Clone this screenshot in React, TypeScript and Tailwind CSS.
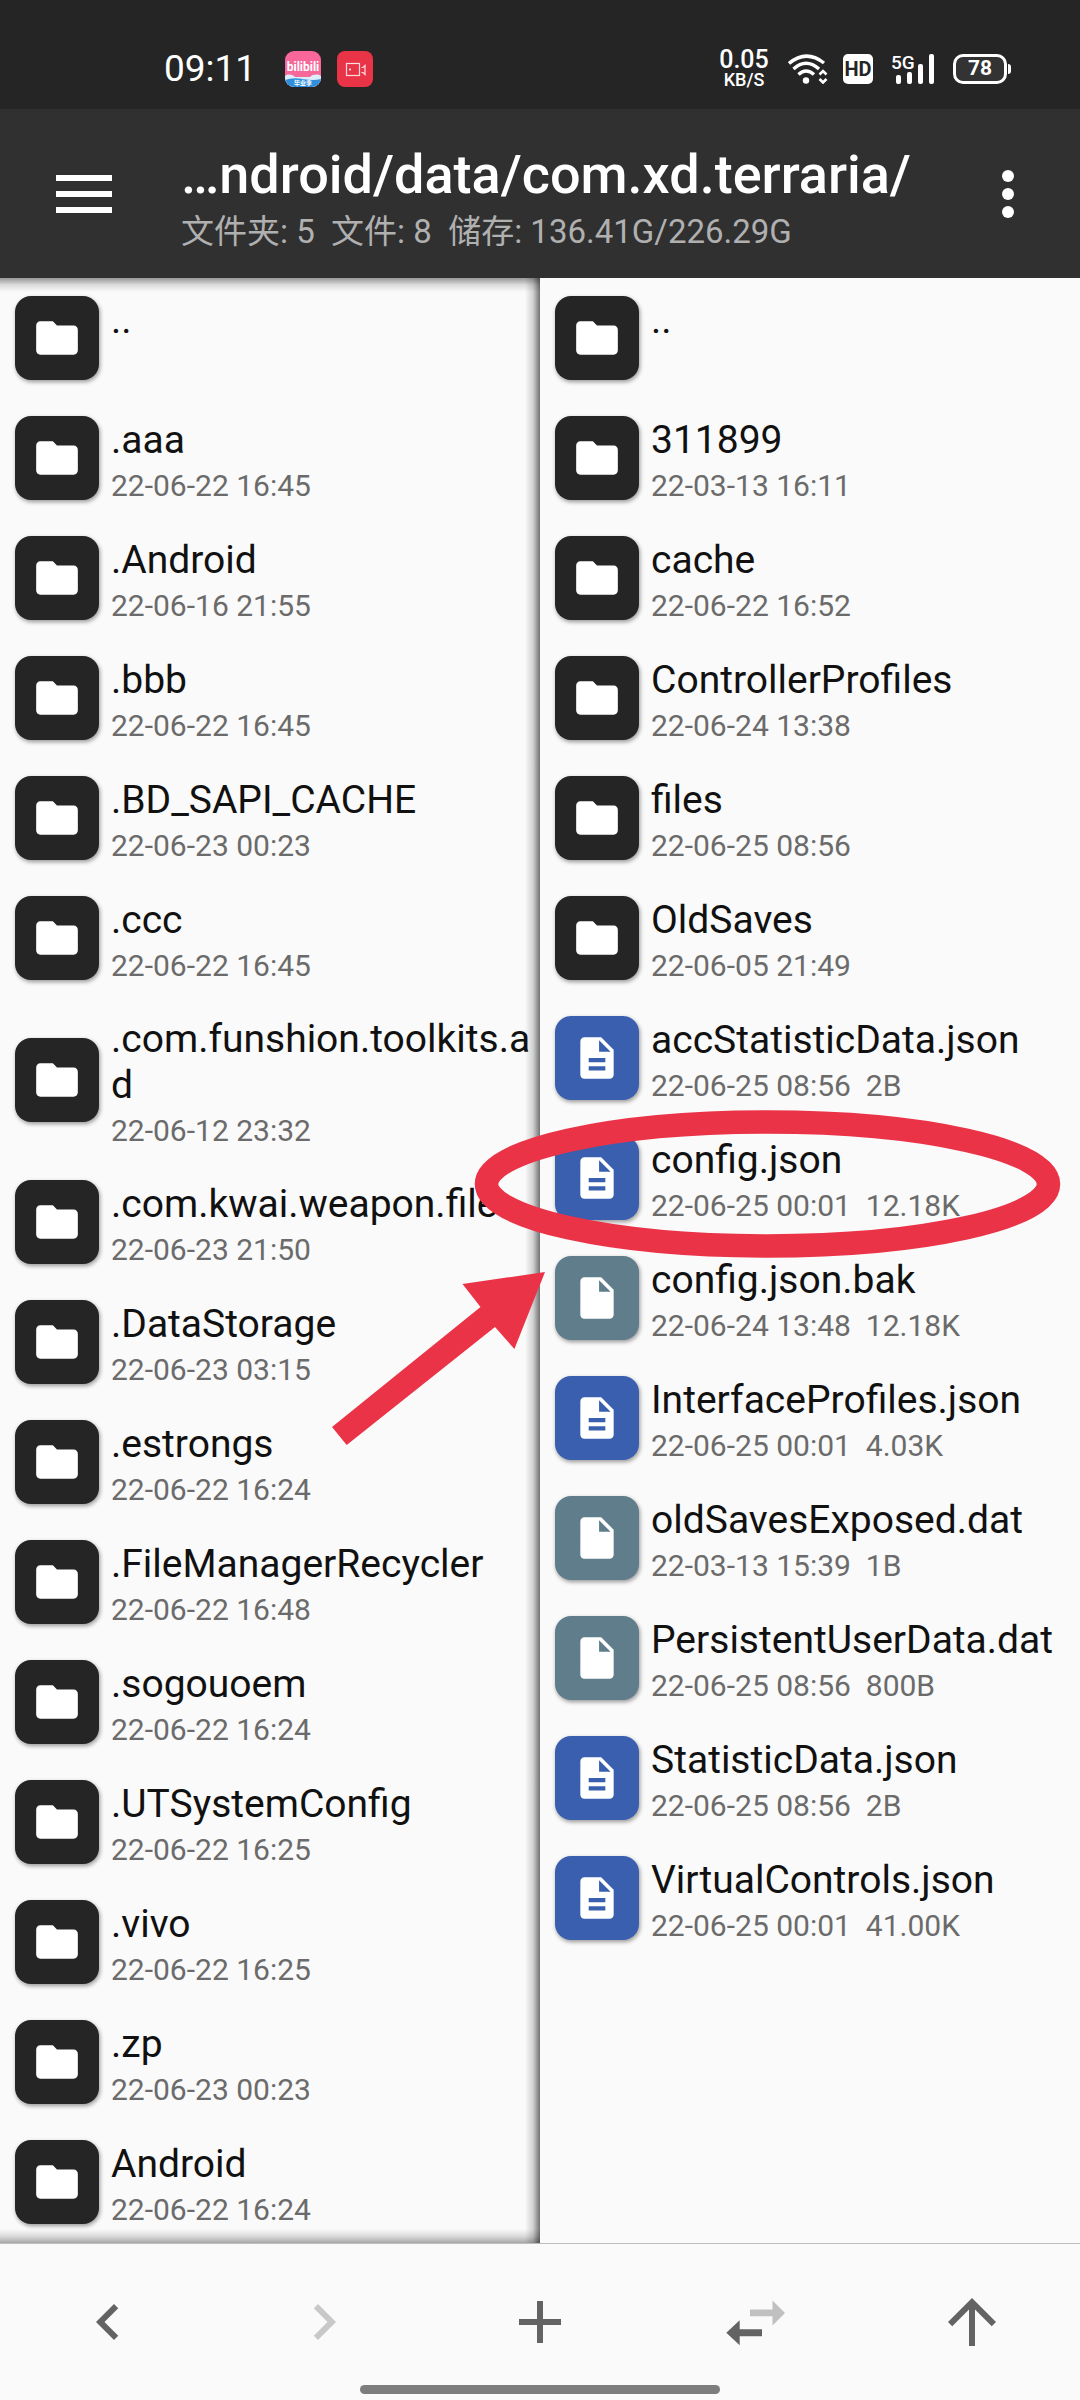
import clsx from 'clsx';
import {
   MdAdd,
   MdArrowUpward,
   MdChevronLeft,
   MdChevronRight,
   MdDescription,
   MdFolder,
   MdInsertDriveFile,
} from 'react-icons/md';

type Kind = 'folder' | 'json' | 'file';

type Entry = {
   name: string;
   date?: string;
   size?: string;
   kind: Kind;
};

const leftEntries: Entry[] = [
   { name: '..', kind: 'folder' },
   { name: '.aaa', date: '22-06-22 16:45', kind: 'folder' },
   { name: '.Android', date: '22-06-16 21:55', kind: 'folder' },
   { name: '.bbb', date: '22-06-22 16:45', kind: 'folder' },
   { name: '.BD_SAPI_CACHE', date: '22-06-23 00:23', kind: 'folder' },
   { name: '.ccc', date: '22-06-22 16:45', kind: 'folder' },
   { name: '.com.funshion.toolkits.ad', date: '22-06-12 23:32', kind: 'folder' },
   { name: '.com.kwai.weapon.file', date: '22-06-23 21:50', kind: 'folder' },
   { name: '.DataStorage', date: '22-06-23 03:15', kind: 'folder' },
   { name: '.estrongs', date: '22-06-22 16:24', kind: 'folder' },
   { name: '.FileManagerRecycler', date: '22-06-22 16:48', kind: 'folder' },
   { name: '.sogouoem', date: '22-06-22 16:24', kind: 'folder' },
   { name: '.UTSystemConfig', date: '22-06-22 16:25', kind: 'folder' },
   { name: '.vivo', date: '22-06-22 16:25', kind: 'folder' },
   { name: '.zp', date: '22-06-23 00:23', kind: 'folder' },
   { name: 'Android', date: '22-06-22 16:24', kind: 'folder' },
];

const rightEntries: Entry[] = [
   { name: '..', kind: 'folder' },
   { name: '311899', date: '22-03-13 16:11', kind: 'folder' },
   { name: 'cache', date: '22-06-22 16:52', kind: 'folder' },
   { name: 'ControllerProfiles', date: '22-06-24 13:38', kind: 'folder' },
   { name: 'files', date: '22-06-25 08:56', kind: 'folder' },
   { name: 'OldSaves', date: '22-06-05 21:49', kind: 'folder' },
   { name: 'accStatisticData.json', date: '22-06-25 08:56', size: '2B', kind: 'json' },
   { name: 'config.json', date: '22-06-25 00:01', size: '12.18K', kind: 'json' },
   { name: 'config.json.bak', date: '22-06-24 13:48', size: '12.18K', kind: 'file' },
   { name: 'InterfaceProfiles.json', date: '22-06-25 00:01', size: '4.03K', kind: 'json' },
   { name: 'oldSavesExposed.dat', date: '22-03-13 15:39', size: '1B', kind: 'file' },
   { name: 'PersistentUserData.dat', date: '22-06-25 08:56', size: '800B', kind: 'file' },
   { name: 'StatisticData.json', date: '22-06-25 08:56', size: '2B', kind: 'json' },
   { name: 'VirtualControls.json', date: '22-06-25 00:01', size: '41.00K', kind: 'json' },
];

const icons = {
   folder: MdFolder,
   json: MdDescription,
   file: MdInsertDriveFile,
};

const BilibiliIcon = () => (
   <svg width="36" height="36" viewBox="0 0 36 36" aria-hidden="true">
      <defs>
         <clipPath id="bili-clip">
            <rect width="36" height="36" rx="9" />
         </clipPath>
      </defs>
      <g clipPath="url(#bili-clip)">
         <rect width="36" height="36" fill="#f7679a" />
         <path d="M0 25c4-3 8-1 10 1h15c3-3 8-3 11-1v11H0z" fill="#dceefb" />
         <path d="M0 29q8-3 18-1t18 0v8H0z" fill="#2f8fdc" />
         <text x="18" y="20" textAnchor="middle" fontSize="12" fontWeight="700" fill="#fff" fontFamily="Roboto, sans-serif">
            bilibili
         </text>
         <text x="18" y="34" textAnchor="middle" fontSize="6" fontWeight="700" fill="#fff" fontFamily="'Noto Sans CJK SC', sans-serif">
            毕业季
         </text>
      </g>
   </svg>
);

const RecorderIcon = () => (
   <svg width="36" height="36" viewBox="0 0 36 36" aria-hidden="true">
      <rect width="36" height="36" rx="8" fill="#e93448" />
      <g fill="none" stroke="#fbdde0" strokeWidth="1.2">
         <rect x="9.5" y="12.5" width="13" height="12" />
         <path d="M24.500 16.500h1.500l2-2v9l-2-2h-1.500" />
      </g>
      <circle cx="13" cy="18.500" r="1" fill="#fff" />
   </svg>
);

const WifiIcon = () => (
   <svg width="40" height="30" viewBox="0 0 40 30" aria-hidden="true">
      <g fill="none" stroke="#fff" strokeWidth="3.400">
         <path d="M1 9.500Q18 -5 36 9" />
         <path d="M5.500 15Q18 3.500 31 15" />
         <path d="M10.500 20.500Q18 13.500 26 20.500" />
         <path d="M31.500 20.500l3.500-3.500 3.500 3.500M31.500 25l3.500 3.500 3.500-3.500" strokeWidth="2.600" />
      </g>
      <circle cx="18" cy="26.500" r="3.200" fill="#fff" />
   </svg>
);

const SignalIcon = () => (
   <svg width="44" height="42" viewBox="0 -6 44 42" fill="#fff" aria-hidden="true">
      <text x="0" y="15" fontSize="19" fontWeight="500" fontFamily="Roboto, sans-serif">
         5G
      </text>
      <rect x="5" y="21" width="5" height="9" rx="2" />
      <rect x="16" y="18" width="5" height="12" rx="2" />
      <rect x="27" y="10" width="5" height="20" rx="2" />
      <rect x="38" y="0" width="5" height="30" rx="2" />
   </svg>
);

const SyncPanelsIcon = () => (
   <svg width="72" height="72" viewBox="0 0 72 72" aria-hidden="true">
      <path d="M30 23.500H52.500V14.500L65 27L52.500 39.500V30.300H30z" fill="#c0c0c0" />
      <path d="M42 43.200H19.700V34.200L6.300 46.700L19.700 59.200V50.200H42z" fill="#636363" />
   </svg>
);

const StatusBar = () => (
   <div className="flex h-[109px] items-center justify-between bg-[#252525] pt-[28px] pr-[69px] pb-0 pl-[164px] text-white">
      <div className="flex items-center">
         <span className="w-[121px] text-[37px] leading-9">09:11</span>
         <div className="flex gap-4">
            <BilibiliIcon />
            <RecorderIcon />
         </div>
      </div>
      <div className="flex items-center">
         <div className="flex w-[54px] flex-col items-center font-medium">
            <span className="text-[25px] leading-[22px]">0.05</span>
            <span className="text-[18px] leading-[18px]">KB/S</span>
         </div>
         <div className="ml-[17px] flex items-center gap-[15px]">
            <WifiIcon />
            <span className="flex h-[30px] w-[30px] items-center justify-center rounded-[5px] bg-white text-[20px] font-bold text-[#252525]">
               HD
            </span>
         </div>
         <div className="ml-[18px]">
            <SignalIcon />
         </div>
         <div className="ml-[18px] flex items-center gap-px">
            <span className="flex h-[30px] w-[54px] items-center justify-center rounded-[10px] border-3 border-white bg-[#333] text-[21px] font-bold">
               78
            </span>
            <span className="h-2.5 w-[3px] rounded-r-sm bg-white" />
         </div>
      </div>
   </div>
);

const Header = () => (
   <header className="flex items-center bg-[#303030] py-[22px] pr-[48px] pl-[56px] text-white">
      <button type="button" aria-label="Menu" className="mr-[69px] flex w-14 flex-col gap-2.5">
         <span className="h-1.5 w-full bg-white" />
         <span className="h-1.5 w-full bg-white" />
         <span className="h-1.5 w-full bg-white" />
      </button>
      <div className="min-w-0 flex-1 pt-[11px]">
         <h1 className="text-[54px] leading-[66px] font-medium whitespace-nowrap">…ndroid/data/com.xd.terraria/</h1>
         <p className="text-[33px] leading-[48px] whitespace-pre text-[#b0b0b0]">
            {'文件夹: 5  文件: 8  储存: 136.41G/226.29G'}
         </p>
      </div>
      <button type="button" aria-label="More options" className="flex w-12 flex-col items-center gap-1.5">
         <span className="h-3 w-3 rounded-full bg-white" />
         <span className="h-3 w-3 rounded-full bg-white" />
         <span className="h-3 w-3 rounded-full bg-white" />
      </button>
   </header>
);

const EntryRow = ({ name, date, size, kind }: Entry) => {
   const Icon = icons[kind];
   return (
      <li>
         <button type="button" className="flex min-h-[120px] w-full items-center gap-3 pr-2 pl-[15px] text-left">
            <span
               className={clsx(
                  'flex h-[84px] w-[84px] shrink-0 items-center justify-center rounded-2xl text-white shadow-[1px_2px_4px_rgb(0_0_0/0.4)]',
                  kind === 'folder' && 'bg-[#252525]',
                  kind === 'json' && 'bg-[#395fae]',
                  kind === 'file' && 'bg-[#5f7d8b]',
               )}
            >
               <Icon size={50} />
            </span>
            <span className="flex min-w-0 flex-1 flex-col pt-[18px] pb-[13px]">
               <span className="text-[39px] leading-[46px] break-all text-[#111]">{name}</span>
               <span className="mt-[5px] min-h-9 text-[30px] leading-9 whitespace-pre text-[#6b6b6b]">
                  {size ? `${date}  ${size}` : date}
               </span>
            </span>
         </button>
      </li>
   );
};

const Annotation = () => (
   <svg
      className="pointer-events-none absolute top-[830px] -left-[208px]"
      width="730"
      height="340"
      viewBox="332 1108 730 340"
      aria-hidden="true"
   >
      <ellipse cx="767.500" cy="1184" rx="281" ry="62" fill="none" stroke="#eb3347" strokeWidth="23.500" />
      <path d="M545 1272L462.500 1284L480.500 1307L332 1427L346.700 1445L495 1327L514.400 1349z" fill="#eb3347" />
   </svg>
);

const BottomBar = () => (
   <footer className="border-t border-[#bdbdbd] bg-[#fafafa] pt-[42px] pb-1.5">
      <nav className="grid grid-cols-5 justify-items-center text-[#636363]">
         <button type="button" aria-label="Back">
            <MdChevronLeft size={72} />
         </button>
         <button type="button" aria-label="Forward" className="text-[#c8c8c8]">
            <MdChevronRight size={72} />
         </button>
         <button type="button" aria-label="Create">
            <MdAdd size={72} />
         </button>
         <button type="button" aria-label="Sync panels">
            <SyncPanelsIcon />
         </button>
         <button type="button" aria-label="Parent folder">
            <MdArrowUpward size={72} />
         </button>
      </nav>
      <div className="mx-auto mt-[27px] h-[9px] w-1/3 rounded-full bg-[#7d7d7d]" />
   </footer>
);

const App = () => {
   return (
      <div className="flex min-h-screen flex-col bg-[#fafafa] font-[Roboto,'Noto_Sans_CJK_SC',sans-serif]">
         <StatusBar />
         <Header />
         <main className="grid flex-1 grid-cols-2">
            <ul className="bg-[#fafafa] bg-[linear-gradient(to_bottom,rgb(0_0_0/0.4),rgb(0_0_0/0.12)_7px,transparent_14px),linear-gradient(to_top,rgb(0_0_0/0.33),rgb(0_0_0/0.12)_7px,transparent_14px),linear-gradient(to_left,rgb(0_0_0/0.55),rgb(0_0_0/0.16)_7px,transparent_15px)]">
               {leftEntries.map((entry) => (
                  <EntryRow key={entry.name} {...entry} />
               ))}
            </ul>
            <div className="relative">
               <ul>
                  {rightEntries.map((entry) => (
                     <EntryRow key={entry.name} {...entry} />
                  ))}
               </ul>
               <Annotation />
            </div>
         </main>
         <BottomBar />
      </div>
   );
};

export default App;
